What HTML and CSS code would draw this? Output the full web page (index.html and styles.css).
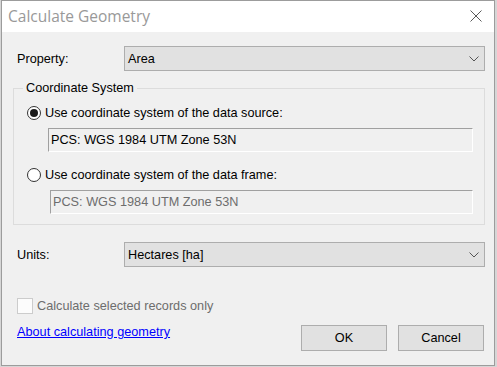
FILE: index.html
```html
<!DOCTYPE html>
<html lang="en">
<head>
  <meta charset="UTF-8" />
  <title>Calculate Geometry</title>
  <link rel="stylesheet" href="styles.css">
</head>
<body>
  <div class="window">
    <div class="titlebar">
      <span class="title">Calculate Geometry</span>
      <svg class="close" width="12" height="12" viewBox="0 0 12 12">
        <path d="M0.5 0.5 L11.5 11.5 M11.5 0.5 L0.5 11.5" stroke="#5a5a5a" stroke-width="1" fill="none"/>
      </svg>
    </div>

    <div class="content">
      <div class="field-row">
        <span class="label">Property:</span>
        <div class="combo">
          <span>Area</span>
          <svg class="chevron" width="10" height="6" viewBox="0 0 10 6">
            <path d="M0.5 0.5 L5 5 L9.5 0.5" stroke="#555" fill="none"/>
          </svg>
        </div>
      </div>

      <fieldset class="group">
        <legend>Coordinate System</legend>
        <div class="radio-row">
          <span class="radio checked"></span>
          <span>Use coordinate system of the data source:</span>
        </div>
        <div class="textbox first">PCS: WGS 1984 UTM Zone 53N</div>
        <div class="radio-row second">
          <span class="radio"></span>
          <span>Use coordinate system of the data frame:</span>
        </div>
        <div class="textbox disabled">PCS: WGS 1984 UTM Zone 53N</div>
      </fieldset>

      <div class="field-row units">
        <span class="label">Units:</span>
        <div class="combo">
          <span>Hectares [ha]</span>
          <svg class="chevron" width="10" height="6" viewBox="0 0 10 6">
            <path d="M0.5 0.5 L5 5 L9.5 0.5" stroke="#555" fill="none"/>
          </svg>
        </div>
      </div>

      <div class="footer">
        <div class="footer-left">
          <div class="check-row">
            <span class="checkbox"></span>
            <span>Calculate selected records only</span>
          </div>
          <a class="help-link" href="#">About calculating geometry</a>
        </div>
        <div class="buttons">
          <button class="btn">OK</button>
          <button class="btn">Cancel</button>
        </div>
      </div>
    </div>
  </div>
</body>
</html>
```

FILE: styles.css
```css
body {
  margin: 0;
  background: #d6d6d6;
  font-family: "Liberation Sans", Arial, sans-serif;
  font-size: 12.7px;
  color: #000;
}
.window {
  box-sizing: border-box;
  width: 494px;
  height: 366px;
  margin-left: 1px;
  border: 1px solid #9c9c9c;
  background: #f0f0f0;
  display: flex;
  flex-direction: column;
}
.titlebar {
  height: 31px;
  background: #fff;
  display: flex;
  align-items: center;
  justify-content: space-between;
  padding: 0 12px 0 6px;
}
.title {
  font-family: "Open Sans", "Noto Sans", sans-serif;
  font-size: 15.5px;
  color: #999;
  margin-top: -1px;
}
.close {
  display: block;
  margin-top: -2px;
}
.content {
  padding: 14px 9px 0 11px;
}
.field-row {
  display: flex;
  align-items: center;
  padding-left: 4px;
}
.label {
  width: 107px;
}
.combo {
  box-sizing: border-box;
  width: 361px;
  height: 25px;
  background: #e1e1e1;
  border: 1px solid #adadad;
  display: flex;
  align-items: center;
  justify-content: space-between;
  padding: 0 5px 0 3px;
}
.chevron {
  display: block;
}
.group {
  margin: 10px 0 0 0;
  padding: 0 11px 10px 13px;
  border: 1px solid #dcdcdc;
  min-width: 0;
}
.group legend {
  margin-left: -4px;
  padding: 0 3px;
  line-height: 15px;
}
.radio-row {
  display: flex;
  align-items: center;
  height: 16px;
  margin-top: 9px;
}
.radio-row.second {
  margin-top: 15px;
}
.radio {
  box-sizing: border-box;
  width: 14px;
  height: 14px;
  border: 1px solid #333;
  border-radius: 50%;
  background: #fff;
  margin-right: 4px;
  display: flex;
  align-items: center;
  justify-content: center;
}
.radio.checked::after {
  content: "";
  width: 8px;
  height: 8px;
  border-radius: 50%;
  background: #1a1a1a;
}
.textbox {
  box-sizing: border-box;
  height: 24px;
  margin-top: 7px;
  margin-left: 21px;
  padding-left: 2px;
  display: flex;
  align-items: center;
  border-top: 1px solid #a0a0a0;
  border-left: 1px solid #a0a0a0;
  border-right: 1px solid #fff;
  border-bottom: 1px solid #fff;
}
.textbox.disabled {
  margin-left: 23px;
  color: #6d6d6d;
}
.units {
  margin-top: 17px;
}
.footer {
  display: flex;
  justify-content: space-between;
  margin-top: 31px;
  padding: 0 1px 0 4px;
}
.check-row {
  display: flex;
  align-items: center;
  height: 16px;
  color: #6d6d6d;
}
.checkbox {
  box-sizing: border-box;
  width: 16px;
  height: 16px;
  border: 1px solid #cccccc;
  background: #fcfcfc;
  margin-right: 4px;
}
.help-link {
  display: block;
  margin-top: 11px;
  line-height: 15px;
  color: #0000ff;
  text-decoration: underline;
}
.buttons {
  display: flex;
  gap: 11px;
  margin-top: 27px;
}
.btn {
  box-sizing: border-box;
  width: 86px;
  height: 26px;
  background: #e1e1e1;
  border: 1px solid #adadad;
  font-family: "Liberation Sans", Arial, sans-serif;
  font-size: 12.7px;
  color: #000;
  padding: 0;
}
```
